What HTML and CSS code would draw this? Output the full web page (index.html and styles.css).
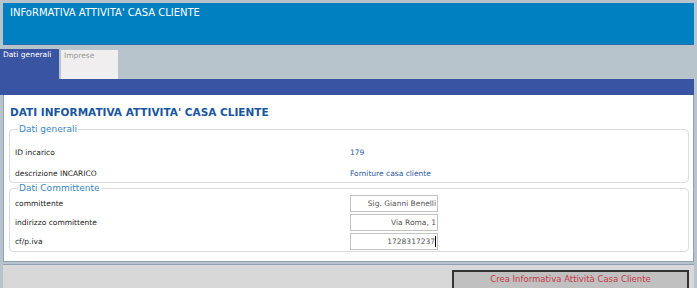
FILE: index.html
```html
<!DOCTYPE html>
<html>
<head>
<meta charset="utf-8">
<link rel="stylesheet" href="styles.css">
</head>
<body>
<div class="page">
  <div class="header">INFoRMATIVA ATTIVITA' CASA CLIENTE</div>
  <div class="tabbar">
    <div class="tab active">Dati generali</div>
    <div class="tab inactive">Imprese</div>
  </div>
  <div class="band"></div>
  <div class="content">
    <h1 class="heading">DATI INFORMATIVA ATTIVITA' CASA CLIENTE</h1>
    <fieldset class="group g1">
      <legend>Dati generali</legend>
      <div class="row"><span class="label">ID incarico</span><span class="value">179</span></div>
      <div class="row"><span class="label">descrizione INCARICO</span><span class="value">Forniture casa cliente</span></div>
    </fieldset>
    <fieldset class="group g2">
      <legend>Dati Committente</legend>
      <div class="row"><span class="label">committente</span><span class="input">Sig. Gianni Benelli</span></div>
      <div class="row"><span class="label">indirizzo committente</span><span class="input">Via Roma, 1</span></div>
      <div class="row"><span class="label">cf/p.iva</span><span class="input">1728317237<i class="caret"></i></span></div>
    </fieldset>
  </div>
  <div class="footer">
    <button class="create">Crea Informativa Attività Casa Cliente</button>
  </div>
</div>
</body>
</html>
```
FILE: styles.css
```css
html, body { margin: 0; padding: 0; }
body { background: #b8c4cc; font-family: "DejaVu Sans", Verdana, sans-serif; width: 697px; height: 288px; overflow: hidden; }
.page { display: flex; flex-direction: column; padding: 3px 3px 0 3px; }
.header { height: 42px; box-sizing: border-box; background: #0080c0; border-bottom: 1px solid #2a6aa8; padding: 4px 0 0 7px; color: #fff; font-size: 10px; line-height: 12px; }
.tabbar { display: flex; align-items: flex-end; height: 34px; margin-left: -3px; gap: 2px; }
.tab { height: 30px; box-sizing: border-box; font-size: 7.5px; line-height: 10px; padding: 1px 2px 0 3px; }
.tab.active { width: 59px; background: #3a54a4; color: #fff; }
.tab.inactive { width: 57px; height: 29px; background: #f0eeee; color: #999; }
.band { height: 16px; background: #3a54a4; margin-left: -3px; }
.content { background: #fff; border-left: 1px solid #8fa0b8; border-right: 1px solid #8fa0b8; border-bottom: 1px solid #8fa0b8; padding: 0 4px 9px 5px; }
.heading { margin: 11px 0 6px 1px; font-size: 10.5px; line-height: 12px; font-weight: bold; color: #1a56a0; }
.group { margin: 0; border: 1px solid #dcdcdc; border-radius: 4px; padding: 0 5px 0 5px; min-width: 0; }
.group legend { color: #3a88c0; font-size: 9px; line-height: 11px; padding: 0 1px; margin-left: 3px; }
.g1 { padding-top: 8px; padding-bottom: 0; display: flex; flex-direction: column; gap: 3px; }
.g2 { padding-top: 0; padding-bottom: 1px; }
.g2 .row + .row { margin-top: 1px; }
.row { display: flex; align-items: center; height: 18px; font-size: 7.5px; color: #222; }
.label { width: 335px; }
.value { color: #2a5aa0; }
.input { width: 88px; height: 17px; box-sizing: border-box; border: 1px solid #c4c4c4; padding: 0 1px 0 0; color: #555; font-size: 7.5px; line-height: 15px; display: flex; align-items: center; justify-content: flex-end; }
.caret { display: inline-block; width: 1px; height: 11px; background: #000; }
.footer { display: flex; justify-content: flex-end; align-items: flex-start; background: #d8d8d8; border-top: 1px solid #8fa0b8; height: 24px; margin-top: 2px; padding: 5px 5px 0 0; box-sizing: border-box; }
.create { width: 237px; height: 18px; background: #c0c0c0; border: 2px solid #333; border-bottom: none; color: #c83848; font-family: "DejaVu Sans", Verdana, sans-serif; font-size: 8.5px; line-height: 11px; padding: 0 0 2px 0; }
```
